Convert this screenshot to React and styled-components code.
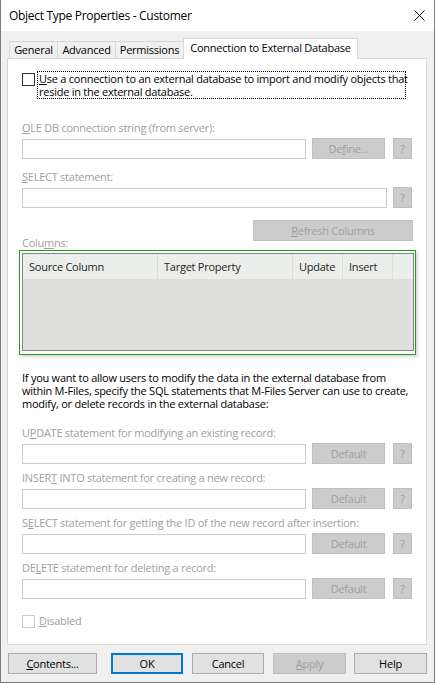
import React from "react";
import styled, { createGlobalStyle } from "styled-components";

const GlobalStyle = createGlobalStyle`
  html, body { margin: 0; padding: 0; background: #fff; }
  body {
    font-family: "Open Sans", "Noto Sans", sans-serif;
    font-size: 11px;
    line-height: 12px;
    letter-spacing: -0.25px;
    color: #000;
  }
`;

const Window = styled.div`
  width: 435px;
  height: 683px;
  box-sizing: border-box;
  border: 1px solid #7c7c7c;
  border-top: none;
  background: #f0f0f0;
  display: flex;
  flex-direction: column;
`;

const TitleBar = styled.div`
  height: 31px;
  background: #fff;
  display: flex;
  align-items: center;
  justify-content: space-between;
  padding-left: 8px;
`;

const Title = styled.div`
  font-size: 12px;
  letter-spacing: -0.3px;
`;

const CloseButton = styled.div`
  width: 30px;
  height: 31px;
  display: flex;
  align-items: center;
  justify-content: center;
`;

const Body = styled.div`
  flex: 1;
  padding: 7px 7px 0 6px;
  display: flex;
  flex-direction: column;
`;

const TabStrip = styled.div`
  display: flex;
  align-items: flex-end;
  height: 21px;
  padding-left: 2px;
  margin-bottom: -1px;
  position: relative;
  z-index: 1;
`;

const Tab = styled.div`
  box-sizing: border-box;
  width: ${(p) => p.$w}px;
  height: ${(p) => (p.$active ? 21 : 18)}px;
  margin-left: ${(p) => (p.$first ? 0 : -1)}px;
  border: 1px solid #d9d9d9;
  border-bottom: ${(p) => (p.$active ? "none" : "1px solid #d9d9d9")};
  background: ${(p) => (p.$active ? "#fff" : "#f0f0f0")};
  display: flex;
  align-items: center;
  justify-content: center;
  padding-bottom: ${(p) => (p.$active ? 2 : 0)}px;
  white-space: nowrap;
`;

const Panel = styled.div`
  height: 587px;
  box-sizing: border-box;
  background: #fff;
  border: 1px solid #d9d9d9;
  padding: 0 13px 0 14px;
  display: flex;
  flex-direction: column;
`;

const CheckRow = styled.div`
  display: flex;
  align-items: flex-start;
  margin-top: ${(p) => p.$top}px;
`;

const Box = styled.div`
  width: 13px;
  height: 13px;
  box-sizing: border-box;
  border: 1px solid ${(p) => (p.$disabled ? "#cccccc" : "#333")};
  background: #fff;
  margin-top: 2px;
  flex-shrink: 0;
`;

const CheckText = styled.div`
  margin-left: 2px;
  padding-left: 1px;
  border: 1px dotted ${(p) => (p.$focus ? "#000" : "transparent")};
  width: ${(p) => (p.$focus ? "366px" : "auto")};
  color: ${(p) => (p.$disabled ? "#a0a0a0" : "#000")};
  line-height: 13px;
  white-space: nowrap;
`;

const Label = styled.div`
  color: #a0a0a0;
  margin-top: ${(p) => p.$top}px;
  height: 12px;
  white-space: nowrap;
`;

const FieldRow = styled.div`
  display: flex;
  align-items: center;
  height: 21px;
  margin-top: 4px;
`;

const TextBox = styled.div`
  box-sizing: border-box;
  width: ${(p) => p.$w}px;
  height: 20px;
  border: 1px solid #cccccc;
  background: #fff;
  margin-top: 1px;
`;

const Button = styled.div`
  box-sizing: border-box;
  width: ${(p) => p.$w}px;
  height: 21px;
  margin-left: ${(p) => p.$gap || 0}px;
  border: ${(p) =>
    p.$default ? "2px solid #0078d7" : p.$disabled ? "1px solid #bfbfbf" : "1px solid #adadad"};
  background: ${(p) => (p.$disabled ? "#cccccc" : "#e1e1e1")};
  color: ${(p) => (p.$disabled ? "#a0a0a0" : "#000")};
  display: flex;
  align-items: center;
  justify-content: center;
  white-space: nowrap;
`;

const RefreshRow = styled.div`
  display: flex;
  justify-content: flex-end;
  margin-top: 12px;
`;

const Highlight = styled.div`
  margin: 1px 0 0 -3px;
  width: 397px;
  height: 105px;
  box-sizing: border-box;
  border: 1px solid #14a914;
  padding: 2px 1px 3px 2px;
  box-shadow: 2px 2px 3px rgba(0, 0, 0, 0.16);
`;

const ListView = styled.div`
  height: 100%;
  box-sizing: border-box;
  border: 1px solid #80857f;
  background: #dfe0dd;
  display: flex;
  flex-direction: column;
`;

const HeaderRow = styled.div`
  display: flex;
  height: 25px;
  background: #eceeeb;
`;

const HeaderCell = styled.div`
  box-sizing: border-box;
  width: ${(p) => p.$w}px;
  flex-shrink: 0;
  border-right: 1px solid #dadcd9;
  padding-left: 6px;
  display: flex;
  align-items: center;
  color: #1e1e1e;
`;

const Paragraph = styled.div`
  margin-top: 16px;
  line-height: 13px;
  white-space: nowrap;
`;

const ButtonBar = styled.div`
  display: flex;
  padding: 8px 0 0 1px;
`;

const U = styled.span`
  text-decoration: underline;
  text-underline-offset: 1px;
`;

const CloseIcon = () => (
  <svg width="11" height="11" viewBox="0 0 11 11">
    <path d="M0.5 0.5 L10.5 10.5 M10.5 0.5 L0.5 10.5" stroke="#000" strokeWidth="1" fill="none" />
  </svg>
);

const Field = ({ label, top, boxWidth, button }) => (
  <>
    <Label $top={top}>{label}</Label>
    <FieldRow>
      <TextBox $w={boxWidth} />
      {button && (
        <Button $w={73} $gap={6} $disabled>
          {button}
        </Button>
      )}
      <Button $w={19} $gap={button ? 8 : 6} $disabled>
        ?
      </Button>
    </FieldRow>
  </>
);

export default function App() {
  return (
    <>
      <GlobalStyle />
      <Window>
        <TitleBar>
          <Title>Object Type Properties - Customer</Title>
          <CloseButton>
            <CloseIcon />
          </CloseButton>
        </TitleBar>
        <Body>
          <TabStrip>
            <Tab $w={49} $first>General</Tab>
            <Tab $w={59}>Advanced</Tab>
            <Tab $w={69}>Permissions</Tab>
            <Tab $w={175} $active>Connection to External Database</Tab>
          </TabStrip>
          <Panel>
            <CheckRow $top={12}>
              <Box />
              <CheckText $focus>
                <U>U</U>se a connection to an external database to import and modify objects that
                <br />
                reside in the external database.
              </CheckText>
            </CheckRow>

            <Field
              top={23}
              boxWidth={284}
              button={<span>De<U>f</U>ine...</span>}
              label={<><U>O</U>LE DB connection string (from server):</>}
            />
            <Field top={12} boxWidth={365} label={<><U>S</U>ELECT statement:</>} />

            <RefreshRow>
              <Button $w={160} $disabled>
                <span><U>R</U>efresh Columns</span>
              </Button>
            </RefreshRow>
            <Label $top={-4}>
              Colu<U>m</U>ns:
            </Label>
            <Highlight>
              <ListView>
                <HeaderRow>
                  <HeaderCell $w={135}>Source Column</HeaderCell>
                  <HeaderCell $w={135}>Target Property</HeaderCell>
                  <HeaderCell $w={50}>Update</HeaderCell>
                  <HeaderCell $w={50}>Insert</HeaderCell>
                </HeaderRow>
              </ListView>
            </Highlight>

            <Paragraph>
              If you want to allow users to modify the data in the external database from
              <br />
              within M-Files, specify the SQL statements that M-Files Server can use to create,
              <br />
              modify, or delete records in the external database:
            </Paragraph>

            <Field
              top={17}
              boxWidth={284}
              button="Default"
              label={<>U<U>P</U>DATE statement for modifying an existing record:</>}
            />
            <Field
              top={8}
              boxWidth={284}
              button="Default"
              label={<>INSER<U>T</U> INTO statement for creating a new record:</>}
            />
            <Field
              top={8}
              boxWidth={284}
              button="Default"
              label={<>S<U>E</U>LECT statement for getting the ID of the new record after insertion:</>}
            />
            <Field
              top={8}
              boxWidth={284}
              button="Default"
              label={<>DE<U>L</U>ETE statement for deleting a record:</>}
            />

            <CheckRow $top={14}>
              <Box $disabled />
              <CheckText $disabled>
                <U>D</U>isabled
              </CheckText>
            </CheckRow>
          </Panel>
          <ButtonBar>
            <Button $w={89}>
              <span><U>C</U>ontents...</span>
            </Button>
            <Button $w={72} $gap={14} $default>OK</Button>
            <Button $w={72} $gap={9}>Cancel</Button>
            <Button $w={73} $gap={9} $disabled>
              <span><U>A</U>pply</span>
            </Button>
            <Button $w={73} $gap={8}>Help</Button>
          </ButtonBar>
        </Body>
      </Window>
    </>
  );
}
